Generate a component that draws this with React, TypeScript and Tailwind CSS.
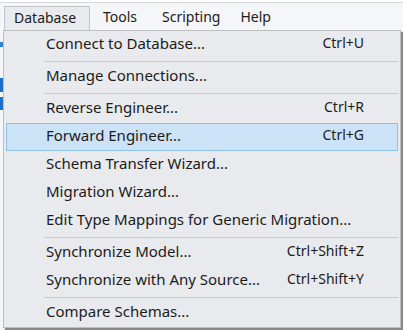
import React from "react";

type Item =
  | { kind: "item"; label: string; shortcut?: string; active?: boolean }
  | { kind: "sep" };

const items: Item[] = [
  { kind: "item", label: "Connect to Database...", shortcut: "Ctrl+U" },
  { kind: "sep" },
  { kind: "item", label: "Manage Connections..." },
  { kind: "sep" },
  { kind: "item", label: "Reverse Engineer...", shortcut: "Ctrl+R" },
  { kind: "item", label: "Forward Engineer...", shortcut: "Ctrl+G", active: true },
  { kind: "item", label: "Schema Transfer Wizard..." },
  { kind: "item", label: "Migration Wizard..." },
  { kind: "item", label: "Edit Type Mappings for Generic Migration..." },
  { kind: "sep" },
  { kind: "item", label: "Synchronize Model...", shortcut: "Ctrl+Shift+Z" },
  { kind: "item", label: "Synchronize with Any Source...", shortcut: "Ctrl+Shift+Y" },
  { kind: "sep" },
  { kind: "item", label: "Compare Schemas..." },
];

const MenuRow: React.FC<{ item: Item }> = ({ item }) => {
  if (item.kind === "sep") {
    return (
      <div className="h-[4px] flex items-center pl-[38px]">
        <div className="h-px w-full bg-[#c9cace]" />
      </div>
    );
  }
  return (
    <div
      className={`h-[28px] flex items-center border pl-[39px] pr-[33px] pb-[4px] ${
        item.active
          ? "bg-[#cce2f6] border-[#8ec0ec]"
          : "border-transparent"
      }`}
    >
      <span className="whitespace-nowrap text-[15px]">{item.label}</span>
      {item.shortcut && (
        <span className="ml-auto whitespace-nowrap">{item.shortcut}</span>
      )}
    </div>
  );
};

export default function App() {
  return (
    <div className="w-[403px] h-[330px] bg-[#f5f6f7] overflow-hidden text-[14px] text-[#1b1b1b] font-['Noto_Sans',sans-serif] leading-none">
      {/* window edge above the menubar */}
      <div className="h-[3px] border-b border-[#d6d7da] bg-white" />

      {/* menubar */}
      <div className="h-[27px] flex items-end pl-[4px]">
        <div className="h-[24px] w-[86px] border border-b-0 border-[#c3c4c8] bg-[#e9eaed] flex items-center pl-[9px] pb-[2px]">
          Database
        </div>
        <div className="h-[24px] flex items-center pl-[13px] pb-[2px]">
          <span>Tools</span>
          <span className="ml-[25px]">Scripting</span>
          <span className="ml-[20px]">Help</span>
        </div>
      </div>

      {/* dropdown */}
      <div className="flex">
        <div className="w-[3px] flex flex-col">
          <div className="h-[12px]" />
          <div className="h-[5px] bg-[#2f7fd3]" />
          <div className="h-[31px]" />
          <div className="h-[14px] bg-[#1e6fc8]" />
          <div className="h-[5px]" />
          <div className="h-[13px] bg-[#1e6fc8]" />
        </div>
        <div className="w-[398px] border border-[#bdbec2] bg-[#e9eaed] px-[2px] shadow-[2px_2px_1px_rgba(0,0,0,0.45)]">
          {items.map((it, i) => (
            <MenuRow key={i} item={it} />
          ))}
        </div>
      </div>
    </div>
  );
}
